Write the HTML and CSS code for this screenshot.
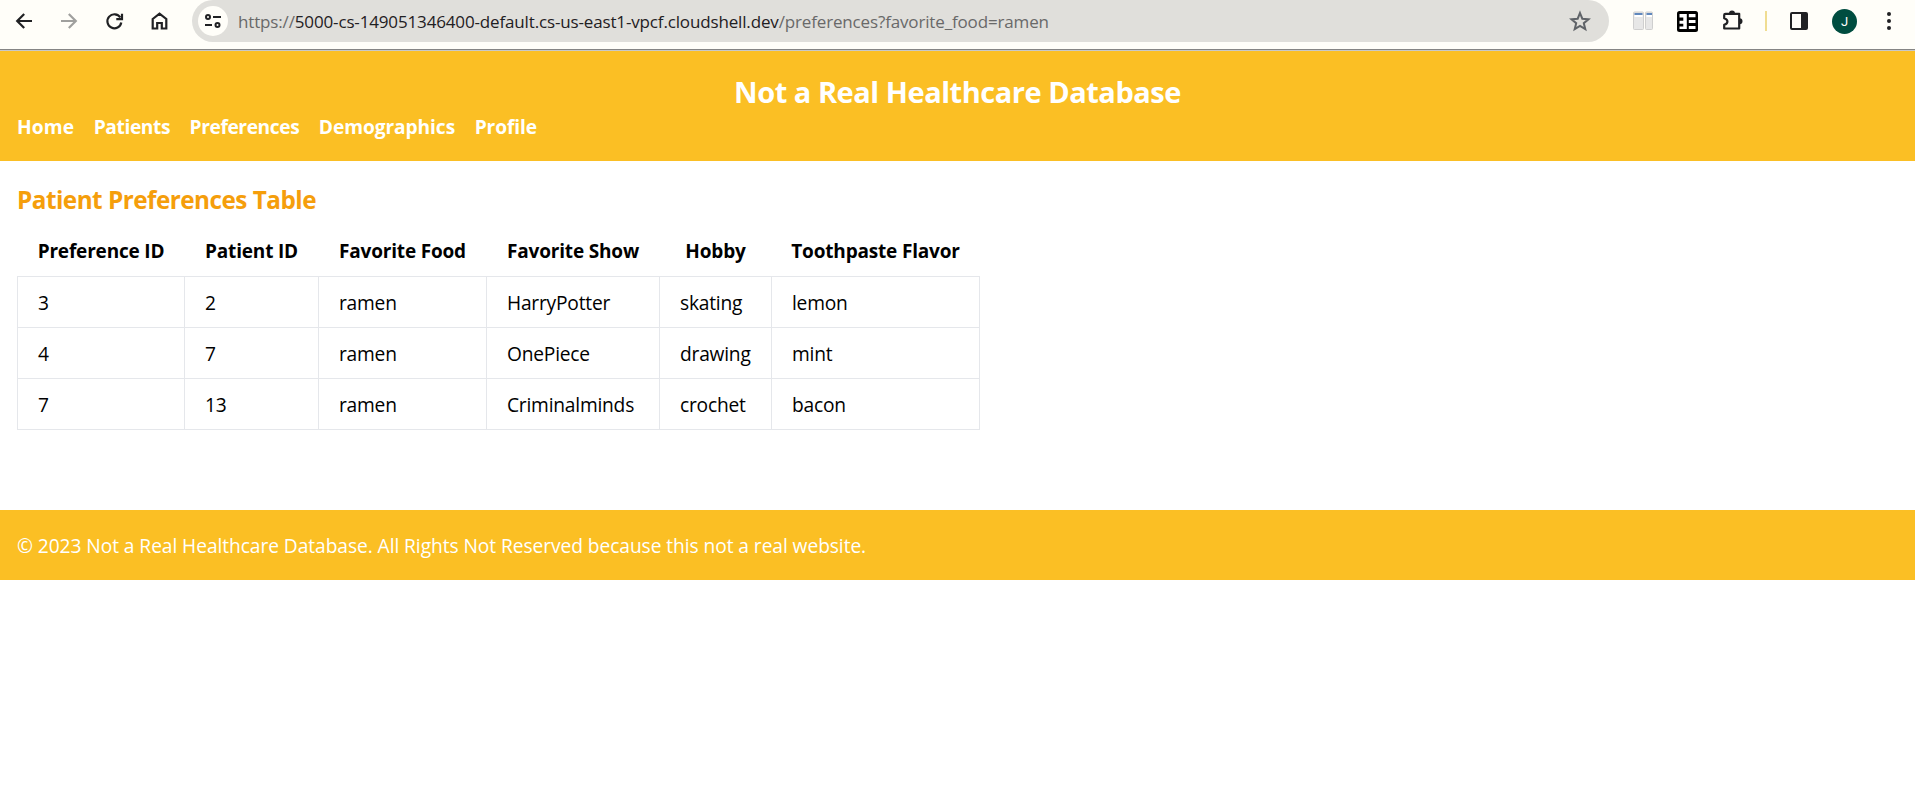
FILE: index.html
```html
<!DOCTYPE html>
<html lang="en">
<head>
<meta charset="utf-8">
<title>Not a Real Healthcare Database</title>
<link rel="stylesheet" href="styles.css">
</head>
<body>
<div class="toolbar">
  <div class="nav-buttons">
    <svg class="icon" viewBox="0 0 24 24"><path d="M20 12H6M12.200 5l-7 7 7 7" /></svg>
    <svg class="icon disabled" viewBox="0 0 24 24"><path d="M4 12h14M11.800 5l7 7-7 7" /></svg>
    <svg class="icon" viewBox="0 0 24 24"><path d="M18.300 8.500A7 7 0 1 0 19.300 13.500M20 4.800V10.200H14.300" /></svg>
    <svg class="icon" viewBox="0 0 24 24"><path d="M5.700 10L12.500 4.600 19.300 10V19.500H14.800V14H10.200V19.500H5.700Z" /></svg>
  </div>
  <div class="address">
    <span class="site-info">
      <svg viewBox="0 0 30 30"><circle cx="10" cy="11" r="2"/><path d="M15 11h8M7 19h7"/><circle cx="19.500" cy="19" r="2"/></svg>
    </span>
    <span class="url"><span class="scheme">https://</span><span class="host">5000-cs-149051346400-default.cs-us-east1-vpcf.cloudshell.dev</span><span class="path">/preferences?favorite_food=ramen</span></span>
    <svg class="star" viewBox="0 0 24 24"><path d="M12 4l2.300 5.700 6.200.5-4.700 4 1.500 6L12 17l-5.300 3.200 1.500-6-4.700-4 6.200-.5Z"/></svg>
  </div>
  <div class="extensions">
    <svg class="ext-columns" viewBox="0 0 20 20"><rect x=".5" y="1" width="10" height="17.500" rx="1" fill="#e7e7e7" stroke="#cfcfcf"/><rect x="12.500" y="1" width="7" height="17.500" rx="1" fill="#e7e7e7" stroke="#cfcfcf"/><path d="M1.500 3h8M13.500 3h5.500" stroke="#6088bd" stroke-width="2"/><path d="M1.500 5h8M13.500 5h5.500" stroke="#fff" stroke-width="2"/></svg>
    <svg class="ext-grid" viewBox="0 0 21 21"><rect width="21" height="21" rx="2.500" fill="#000"/><path d="M2.500 3h7.300v15H2.500v-2.600h3.800v-2.600H2.500v-3h3.800V6.500H2.500ZM11.800 3H18.500v3.200h-6.700ZM11.800 9h6.700v3h-6.700ZM11.800 15h6.700v3h-6.700Z" fill="#fff"/></svg>
    <svg class="ext-puzzle" viewBox="0 0 22 22"><path d="M3.500 3.800H17.200V18.500H2.200V14.800C6.500 13.800 6.500 9.500 2.200 8.200V5Q2.200 3.800 3.500 3.800Z" fill="none" stroke="#202124" stroke-width="2.200" stroke-linejoin="round"/><path d="M7 3.500a3 3 0 0 1 6 0ZM17.500 8.300a3 3 0 0 1 0 6Z" fill="#202124"/></svg>
    <span class="divider"></span>
    <svg class="side-panel" viewBox="0 0 18 18"><rect x="1" y="1" width="16" height="16" rx="1" fill="none" stroke="#202124" stroke-width="2"/><path d="M11 1h6v16h-6Z" fill="#202124"/></svg>
    <span class="avatar">J</span>
    <svg class="menu" viewBox="0 0 6 20"><circle cx="3" cy="3" r="2"/><circle cx="3" cy="10" r="2"/><circle cx="3" cy="17" r="2"/></svg>
  </div>
</div>
<header class="site-header">
  <h1>Not a Real Healthcare Database</h1>
  <nav>
    <a class="home">Home</a><a class="tight">Patients</a><a class="tight">Preferences</a><a>Demographics</a><a>Profile</a>
  </nav>
</header>
<main>
  <h2>Patient Preferences Table</h2>
  <table>
    <colgroup><col class="c1"><col class="c2"><col class="c3"><col class="c4"><col class="c5"><col class="c6"></colgroup>
    <thead>
      <tr><th>Preference ID</th><th>Patient ID</th><th>Favorite Food</th><th>Favorite Show</th><th>Hobby</th><th>Toothpaste Flavor</th></tr>
    </thead>
    <tbody>
      <tr><td>3</td><td>2</td><td>ramen</td><td>HarryPotter</td><td>skating</td><td>lemon</td></tr>
      <tr><td>4</td><td>7</td><td>ramen</td><td>OnePiece</td><td>drawing</td><td>mint</td></tr>
      <tr><td>7</td><td>13</td><td>ramen</td><td>Criminalminds</td><td>crochet</td><td>bacon</td></tr>
    </tbody>
  </table>
</main>
<footer>© 2023 Not a Real Healthcare Database. All Rights Not Reserved because this not a real website.</footer>
</body>
</html>
```
FILE: styles.css
```css
* { box-sizing: border-box; }
body {
  margin: 0;
  background: #fff;
  color: #000;
  font: 19.2px/30px "Open Sans", "Noto Sans", sans-serif;
  letter-spacing: -0.22px;
}
h1, h2 { margin: 0; font-weight: 700; }

.toolbar {
  display: flex;
  height: 51px;
  background: #fffef9;
  border-bottom: 1px solid #c8c8c8;
  box-shadow: inset 0 -1px #858585;
}
.nav-buttons {
  display: flex;
  align-items: center;
  gap: 21px;
  width: 192px;
  height: 42px;
  padding-left: 12px;
}
.icon { width: 24px; height: 24px; fill: none; stroke: #202124; stroke-width: 2.2; }
.disabled { stroke: #a0a09e; }
.address {
  display: flex;
  align-items: center;
  width: 1417px;
  height: 42px;
  padding: 0 17px 0 6px;
  border-radius: 21px;
  background: #e0dfdb;
}
.site-info { width: 30px; height: 30px; border-radius: 50%; background: #fffef9; }
.site-info svg { display: block; fill: none; stroke: #202124; stroke-width: 2; }
.url {
  flex: 1;
  margin-left: 10px;
  padding-top: 1px;
  font-size: 17px;
  letter-spacing: -0.15px;
  white-space: nowrap;
}
.scheme, .path { color: #696969; }
.host { color: #1f2023; }
.star { width: 24px; height: 24px; fill: none; stroke: #5f6368; stroke-width: 2; }
.extensions { display: flex; align-items: center; flex: 1; height: 42px; padding-left: 24px; }
.ext-columns { width: 20px; height: 20px; }
.ext-grid { width: 21px; height: 21px; margin-left: 24px; }
.ext-puzzle { width: 22px; height: 22px; margin-left: 24px; }
.divider { width: 2px; height: 20px; margin-left: 21px; background: #f0dd92; }
.side-panel { width: 18px; height: 18px; margin-left: 23px; }
.avatar {
  width: 25px;
  height: 25px;
  margin-left: 24px;
  border-radius: 50%;
  background: #004d40;
  color: #fff;
  font: 13px/25px Roboto, sans-serif;
  text-align: center;
}
.menu { width: 6px; height: 20px; margin-left: 29px; fill: #202124; }

.site-header { height: 110px; padding: 21px 17px 19px; background: #fbbf24; color: #fff; }
h1 { font-size: 29px; line-height: 40px; letter-spacing: -0.47px; text-align: center; }
nav { display: flex; gap: 19.6px; font-size: 19.2px; font-weight: 700; letter-spacing: -0.1px; }
.home { letter-spacing: 0.1px; }
.tight { letter-spacing: -0.42px; }

main { height: 349px; padding: 20px 17px; }
h2 { font-size: 24.3px; line-height: 38px; letter-spacing: -0.52px; color: #f59e0b; }
table { width: 963px; margin-top: 6px; border-collapse: collapse; table-layout: fixed; }
.c1 { width: 167px; }
.c2 { width: 134px; }
.c3 { width: 168px; }
.c4 { width: 173px; }
.c5 { width: 112px; }
.c6 { width: 208px; }
th { height: 51px; padding: 2px 0 0; font-size: 19px; font-weight: 700; letter-spacing: -0.18px; }
td { height: 51px; padding: 2px 20px 0; border: 1px solid #e5e7eb; }
footer { height: 70px; padding: 21px 17px 19px; background: #fbbf24; color: #fff; letter-spacing: -0.07px; }
```
